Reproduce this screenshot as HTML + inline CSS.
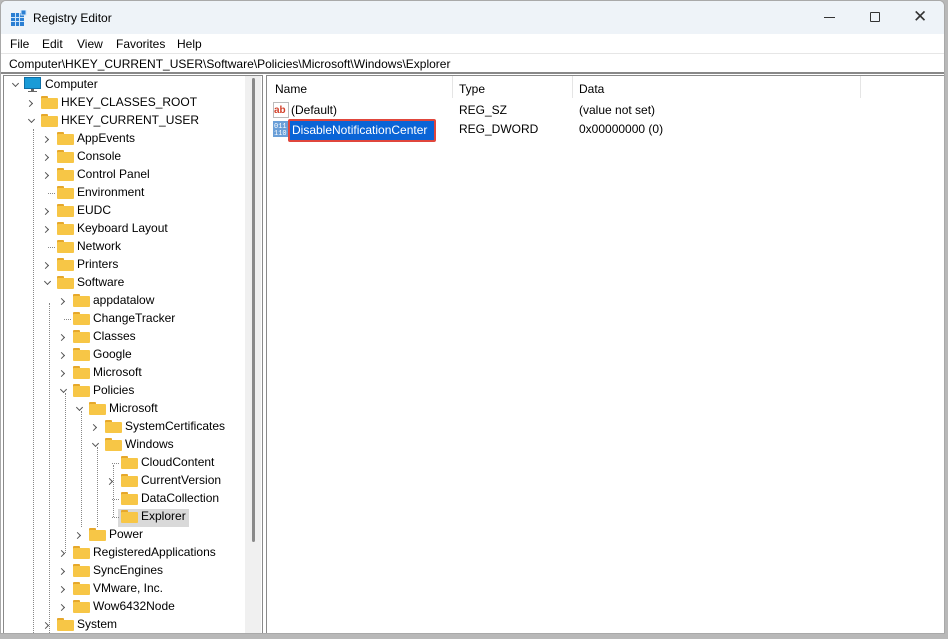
<!DOCTYPE html><html><head><style>
*{margin:0;padding:0;box-sizing:border-box}
body{width:948px;height:639px;background:#b8b8b8;font-family:"Liberation Sans",sans-serif;font-size:12px;color:#000;position:relative;overflow:hidden}
.win{position:absolute;left:0;top:0;width:945px;height:634px;background:#fff;border:1px solid #a9a9a9;border-radius:6px 6px 0 0;overflow:hidden}
.title{position:absolute;left:0;top:0;width:100%;height:33px;background:#eef3f8}
.t{position:absolute;white-space:nowrap}
.tree{position:absolute;left:2px;top:74px;width:260px;height:559px;border:1px solid #8a8a8a;border-bottom:none;background:#fff}
.list{position:absolute;left:265px;top:74px;width:679px;height:559px;border:1px solid #8a8a8a;border-right:none;border-bottom:none;background:#fff}
.f{position:absolute;width:17px;height:13px}
.f:before{content:"";position:absolute;left:0;top:0;width:7px;height:4px;background:#e6a82b;border-radius:1px 1px 0 0}
.f:after{content:"";position:absolute;left:0;top:2px;width:17px;height:11px;background:#f7c646;border-radius:1px}
.ch{position:absolute;width:5px;height:5px;border-right:1px solid #555;border-bottom:1px solid #555}
.r{transform:rotate(-45deg)}
.d{transform:rotate(45deg)}
.vl{position:absolute;border-left:1px dotted #888;width:0}
.hl{position:absolute;border-top:1px dotted #888;height:0}
</style></head><body>
<div class="win">
<div class="title">
<svg style="position:absolute;left:10px;top:9px" width="16" height="16" viewBox="0 0 16 16"><rect x="0" y="3" width="13" height="13" fill="#2b7fd3"/><g stroke="#cfe6fb" stroke-width="1"><line x1="0" y1="7.5" x2="13" y2="7.5"/><line x1="0" y1="11.5" x2="13" y2="11.5"/><line x1="4.5" y1="3" x2="4.5" y2="16"/><line x1="8.5" y1="3" x2="8.5" y2="16"/></g><rect x="10" y="0" width="5" height="5" fill="#2b7fd3" stroke="#cfe6fb" stroke-width="1"/></svg>
<div class="t" style="left:32px;top:10px">Registry Editor</div>
<div style="position:absolute;left:823px;top:16px;width:11px;border-top:1px solid #333"></div>
<div style="position:absolute;left:869px;top:11px;width:10px;height:10px;border:1px solid #333;border-radius:1px"></div>
<div class="t" style="left:912px;top:6px;font-size:17px;color:#333">✕</div>
</div>
<div class="t" style="left:9px;top:36px">File</div>
<div class="t" style="left:41px;top:36px">Edit</div>
<div class="t" style="left:76px;top:36px">View</div>
<div class="t" style="left:115px;top:36px">Favorites</div>
<div class="t" style="left:176px;top:36px">Help</div>
<div style="position:absolute;left:0;top:52px;width:944px;height:21px;border-top:1px solid #e6e6e6;border-bottom:2px solid #888"></div>
<div class="t" style="left:8px;top:56px">Computer\HKEY_CURRENT_USER\Software\Policies\Microsoft\Windows\Explorer</div>
<div class="tree">
<div style="position:absolute;left:241px;top:0;width:16px;height:559px;background:#f0f0f0"></div>
<div style="position:absolute;left:248px;top:2px;width:3px;height:464px;background:#8a8a8a;border-radius:2px"></div>
</div>
<div class="list">
<div style="position:absolute;left:185px;top:0;height:22px;border-left:1px solid #e5e5e5"></div>
<div style="position:absolute;left:305px;top:0;height:22px;border-left:1px solid #e5e5e5"></div>
<div style="position:absolute;left:593px;top:0;height:22px;border-left:1px solid #e5e5e5"></div>
<div class="t" style="left:8px;top:6px">Name</div>
<div class="t" style="left:192px;top:6px">Type</div>
<div class="t" style="left:312px;top:6px">Data</div>
<svg style="position:absolute;left:6px;top:26px" width="16" height="16"><rect x="0.5" y="0.5" width="15" height="15" fill="#fff" stroke="#bbb"/><text x="1" y="11" font-size="10" font-weight="bold" fill="#d2402a" font-family="Liberation Sans">ab</text></svg>
<div class="t" style="left:24px;top:27px">(Default)</div>
<div class="t" style="left:192px;top:27px">REG_SZ</div>
<div class="t" style="left:312px;top:27px">(value not set)</div>
<svg style="position:absolute;left:6px;top:45px" width="16" height="16"><rect x="0" y="0" width="16" height="16" fill="#6a9fd8"/><text x="1" y="7" font-size="7" fill="#fff" font-family="Liberation Mono">011</text><text x="1" y="14" font-size="7" fill="#fff" font-family="Liberation Mono">110</text></svg>
<div style="position:absolute;left:21px;top:43px;width:148px;height:23px;border:2px solid #e0463c;border-radius:2px;background:#0a64d6"></div>
<div class="t" style="left:25px;top:47px;color:#fff">DisableNotificationCenter</div>
<div class="t" style="left:192px;top:46px">REG_DWORD</div>
<div class="t" style="left:312px;top:46px">0x00000000 (0)</div>
</div>
<div id="rows"></div>
</div>
<script>
var R=[[0,"Computer",'d',1],[1,"HKEY_CLASSES_ROOT",'r'],[1,"HKEY_CURRENT_USER",'d'],[2,"AppEvents",'r'],[2,"Console",'r'],[2,"Control Panel",'r'],[2,"Environment",''],[2,"EUDC",'r'],[2,"Keyboard Layout",'r'],[2,"Network",''],[2,"Printers",'r'],[2,"Software",'d'],[3,"appdatalow",'r'],[3,"ChangeTracker",''],[3,"Classes",'r'],[3,"Google",'r'],[3,"Microsoft",'r'],[3,"Policies",'d'],[4,"Microsoft",'d'],[5,"SystemCertificates",'r'],[5,"Windows",'d'],[6,"CloudContent",''],[6,"CurrentVersion",'r'],[6,"DataCollection",''],[6,"Explorer",'',0,1],[4,"Power",'r'],[3,"RegisteredApplications",'r'],[3,"SyncEngines",'r'],[3,"VMware, Inc.",'r'],[3,"Wow6432Node",'r'],[2,"System",'r']];
var h='';
R.forEach(function(r,i){var y=76+i*18,L=r[0],x=16*L;
if(r[4])h+='<div style="position:absolute;left:'+(x+21)+'px;top:'+(y)+'px;width:71px;height:18px;background:#d9d9d9"></div>';
if(r[2]=='r')h+='<div class="ch r" style="left:'+(x+10)+'px;top:'+(y+6)+'px"></div>';
else if(r[2]=='d')h+='<div class="ch d" style="left:'+(x+12)+'px;top:'+(y+4)+'px"></div>';
else h+='<div class="hl" style="left:'+(x+15)+'px;top:'+(y+8)+'px;width:7px"></div>';
if(r[3])h+='<svg style="position:absolute;left:23px;top:'+(y)+'px" width="17" height="16"><rect x="0.5" y="0.5" width="16" height="11" fill="#1a9bd7" stroke="#0e6fa6"/><rect x="7" y="12" width="3" height="2" fill="#666"/><rect x="4" y="14" width="9" height="1" fill="#666"/></svg>';
else h+='<div class="f" style="left:'+(x+24)+'px;top:'+(y+1)+'px"></div>';
h+='<div class="t" style="left:'+(x+44)+'px;top:'+y+'px">'+r[1]+'</div>';});
[[32,128,632],[48,302,632],[64,392,552],[80,410,526],[96,446,526],[112,464,516]].forEach(function(v){h+='<div class="vl" style="left:'+v[0]+'px;top:'+v[1]+'px;height:'+(v[2]-v[1])+'px"></div>';});
document.getElementById('rows').innerHTML=h;
</script>
</body></html>
